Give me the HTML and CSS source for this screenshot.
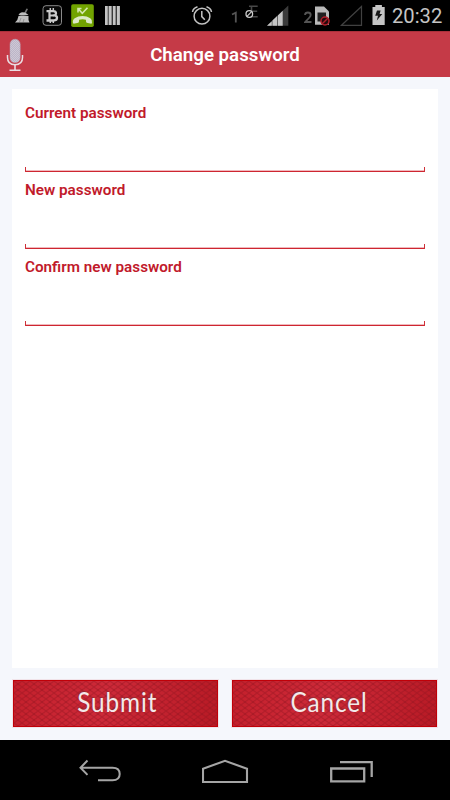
FILE: index.html
```html
<!DOCTYPE html>
<html lang="en">
<head>
<meta charset="utf-8">
<title>Change password</title>
<link rel="stylesheet" href="styles.css">
</head>
<body>
<div class="screen">
  <div class="status">
    <div class="status-group notices">
      <svg width="18" height="31" viewBox="14 0 18 31"><path d="M26.500 8.500l1.500.5-2.500 5-1.500-.8z" fill="#777"/><path d="M19.500 13.500q3-2.500 7.500.2l1.500 1.300q-5 1-10-.1zM18.500 16h10v1q-.5 4 1 5.500H15q3-2.500 3.500-6.500z" fill="#bdbdbd"/><path d="M21 18l-1.500 4M24 19l-.8 3" stroke="#777" stroke-width=".6"/></svg>
      <svg width="21" height="31" viewBox="42 0 21 31"><rect x="43" y="5.700" width="18.500" height="19.600" rx="3" fill="#080808" stroke="#999" stroke-width=".9"/><path d="M50.300 8v3M53.300 8v3M50.300 20v3M53.300 20v3" stroke="#ccc" stroke-width="1.500"/><path d="M46.500 11.200H53q3 0 3 2.200 0 1.300-1.400 1.900 2.400.6 2.400 2.500 0 2.700-3.500 2.700h-7" fill="none" stroke="#ccc" stroke-width="2.300"/><path d="M49.500 11v10M49 15.500h5" stroke="#ccc" stroke-width="2.200"/></svg>
      <svg width="24" height="31" viewBox="71 0 24 31"><rect x="71.200" y="4.300" width="22.600" height="22.700" rx="1.800" fill="#71a300"/><path d="M78 12.500V8.500h3.500M78.500 9l3.800 4.300 5.200-5.500" fill="none" stroke="#d4e6ad" stroke-width="1.600"/><path d="M73 23q-.7-3 1.700-4.700 3.300-2.300 7.800-2.300t7.800 2.300Q92.700 20 92 23l-.7.700-4.600-.9-.6-.7-.2-2.400q-3.400-1.100-6.800 0l-.2 2.400-.6.700-4.600.9z" fill="#dce9c6"/></svg>
      <svg width="16" height="31" viewBox="105 0 16 31"><path d="M105 6h2.800v19H105zM108.500 6h3.200v19h-3.200zM112.700 6h3v19h-3zM116.700 6h3.200v19h-3.200z" fill="#c4c4c4"/></svg>
    </div>
    <div class="status-group signals">
      <svg width="22" height="31" viewBox="191 0 22 31"><g fill="none" stroke="#c2c2c2" stroke-width="1.500"><circle cx="202" cy="16.200" r="7.900"/><path d="M201.800 11v5.600l3 3.200M192.500 12q.6-4 5-5.300M211.500 12q-.6-4-5-5.300"/></g></svg>
      <svg width="30" height="31" viewBox="230 0 30 31"><path d="M232 14.500l3.800-1.800v9.800" fill="none" stroke="#555" stroke-width="1.800"/><path d="M257.700 6.200h-8.700M257.200 11.300h-5.500M257.700 16.700h-6.200V6" fill="none" stroke="#484848" stroke-width="1.600"/><circle cx="249.300" cy="14" r="3.300" fill="#000" stroke="#ccc" stroke-width="1.300"/><path d="M247 16.300l4.600-4.600" stroke="#ccc" stroke-width="1.200"/></svg>
      <svg width="22" height="31" viewBox="267 0 22 31"><path d="M267 25.800L288.300 5.500v20.300z" fill="#3b3b3b"/><path d="M267 25.800l4.800-4.600v4.600zM272.400 20.600l4.700-4.500v9.700h-4.700zM277.800 15.500l4.900-4.700v15h-4.900z" fill="#c5c5c5"/></svg>
      <svg width="26" height="31" viewBox="304 0 26 31"><path d="M305 15q.2-2.500 2.900-2.500t2.800 2.400q0 1.300-1.700 3.100l-3.700 4h6.200" fill="none" stroke="#555" stroke-width="1.800"/><path d="M315 6.500h9l5 5v13.300h-14z" fill="#b9b9b9"/><path d="M317.500 12.500h8.500v9h-8.500z" fill="#202020"/><circle cx="325" cy="21" r="4" fill="#24090c" stroke="#b11e29" stroke-width="1.500"/><path d="M322.200 23.800l5.600-5.600" stroke="#b11e29" stroke-width="1.400"/></svg>
      <svg width="23" height="31" viewBox="340 0 23 31"><path d="M341.500 25.300L361.500 6.500v18.800z" fill="#030303" stroke="#414141" stroke-width="1.200"/></svg>
      <svg width="14" height="31" viewBox="372 0 14 31"><path d="M375.300 5h6.600v2h2.800v18h-12.200V7h2.800z" fill="#c5c5c5"/><path d="M377 10.500h3.600l-1 3.500h2.700L376.800 20.500l1.200-4.700h-2.800z" fill="#171717"/></svg>
      <span class="clock">20:32</span>
    </div>
  </div>

  <header class="header">
    <svg class="mic" width="18" height="34" viewBox="0 0 18 34"><defs><pattern id="mesh" width="2" height="2" patternUnits="userSpaceOnUse"><rect width="2" height="2" fill="#bcb5c8"/><path d="M0 0h1v1H0zM1 1h1v1H1z" fill="#cec8d5"/></pattern></defs><rect x="4" y="1.200" width="10.200" height="23.600" rx="5.100" fill="url(#mesh)" stroke="#b5a2b5" stroke-width=".5"/><path d="M1.500 17v2.500q0 7.200 7.500 7.200t7.500-7.200V17" fill="none" stroke="#eadde2" stroke-width="1.500"/><path d="M9 26.700v5M3.500 32.300h11" stroke="#eadde2" stroke-width="1.600"/></svg>
    <h1>Change password</h1>
  </header>

  <main class="content">
    <form class="card">
      <label class="field"><span>Current password</span><input type="password"></label>
      <label class="field"><span>New password</span><input type="password"></label>
      <label class="field"><span>Confirm new password</span><input type="password"></label>
    </form>
    <div class="actions">
      <button class="submit" type="button"><span>Submit</span></button>
      <button class="cancel" type="button"><span>Cancel</span></button>
    </div>
  </main>

  <nav class="nav">
    <svg width="43" height="26" viewBox="79 760 43 26"><path d="M81 768.700h31.500q7.200 0 7.200 6.300t-7.200 6.300H98M87.500 761.500l-7 7.200 7 7.200" fill="none" stroke="#a5a5a5" stroke-width="2"/></svg>
    <svg width="48" height="26" viewBox="202 758 48 26"><path d="M203 781v-13.200l22-8 22 8V781z" fill="none" stroke="#a5a5a5" stroke-width="2.100"/></svg>
    <svg width="44" height="24" viewBox="330 760 44 24"><path d="M331.200 768.500h33v12.800h-33zM340 762.200h31.700V777" fill="none" stroke="#a5a5a5" stroke-width="2.300"/></svg>
  </nav>
</div>
</body>
</html>
```
FILE: styles.css
```css
* { box-sizing: border-box; }
body { margin: 0; font-family: Roboto, sans-serif; }
svg { display: block; flex: none; }

.screen {
  width: 450px;
  height: 800px;
  display: flex;
  flex-direction: column;
  background: #f5f7fc;
}

.status {
  height: 31px;
  display: flex;
  justify-content: space-between;
  padding: 0 7px 0 14px;
  background: #000;
}
.status-group { display: flex; }
.notices { gap: 10px; }
.notices svg:nth-child(3) { margin-left: -2px; }
.signals svg:nth-child(2) { margin-left: 17px; }
.signals svg:nth-child(3) { margin-left: 7px; }
.signals svg:nth-child(4) { margin-left: 15px; }
.signals svg:nth-child(5) { margin-left: 10px; }
.signals svg:nth-child(6) { margin-left: 9px; }
.clock {
  width: 51px;
  margin-left: 6px;
  color: #c5c5c5;
  font-size: 20.200px;
  line-height: 33px;
  white-space: nowrap;
}

.header {
  height: 46px;
  display: grid;
  grid-template-columns: 24px 1fr 24px;
  align-items: center;
  padding: 0 6px;
  background: #c53a47;
  border-top: 1px solid #aa303b;
}
.header h1 {
  margin: 0;
  color: #fff;
  text-align: center;
  font-size: 18.700px;
  font-weight: 600;
  line-height: 24px;
}

.content {
  flex: 1;
  display: flex;
  flex-direction: column;
  padding: 12px 12px 13px;
}
.card {
  flex: 1;
  padding: 12px 13px 0;
  background: #fff;
}
.field {
  height: 77px;
  display: flex;
  flex-direction: column;
  justify-content: space-between;
  padding: 3px 0 6px;
  color: #c11a2b;
  font-size: 15.250px;
  font-weight: 600;
  line-height: 18px;
}
.field input {
  width: 100%;
  height: 44px;
  border: 0;
  outline: 0;
  padding: 0 8px;
  background:
    linear-gradient(#ce3038, #ce3038) left bottom / 1px 5px no-repeat,
    linear-gradient(#ce3038, #ce3038) right bottom / 1px 5px no-repeat,
    linear-gradient(#ce2630, #ce2630) bottom / 100% 1px no-repeat,
    linear-gradient(#f0b9bd, #f0b9bd) bottom / 100% 2px no-repeat;
}

.actions {
  display: grid;
  grid-template-columns: 1fr 1fr;
  gap: 14px;
  margin: 12px 1px 0;
}
.actions button {
  height: 47px;
  padding: 0;
  border: 1px solid #c00008;
  border-radius: 0;
  box-shadow: 0 0 0 1px #f0e3e9;
  color: #f4e9e9;
  font: 27px/45px Lato, sans-serif;
  letter-spacing: 1px;
  background:
    linear-gradient(to top right, transparent 38%, #8f142068 50%, transparent 62%) 0 0 / 8px 6px,
    linear-gradient(to bottom right, transparent 38%, #8f142068 50%, transparent 62%) 0 0 / 8px 6px,
    linear-gradient(100deg, #c4202c, #cd2a39 45%, #b81a25);
}
.actions span {
  display: block;
  height: 45px;
  line-height: 42px;
  text-shadow: -1px -1px 1px #74313699;
  transform: scaleX(.9);
}
.submit span { padding-left: 4px; }
.cancel span { padding-right: 12px; }

.nav {
  height: 60px;
  display: flex;
  justify-content: space-between;
  align-items: center;
  padding: 3px 76px 0 79px;
  background: #000;
}
```
